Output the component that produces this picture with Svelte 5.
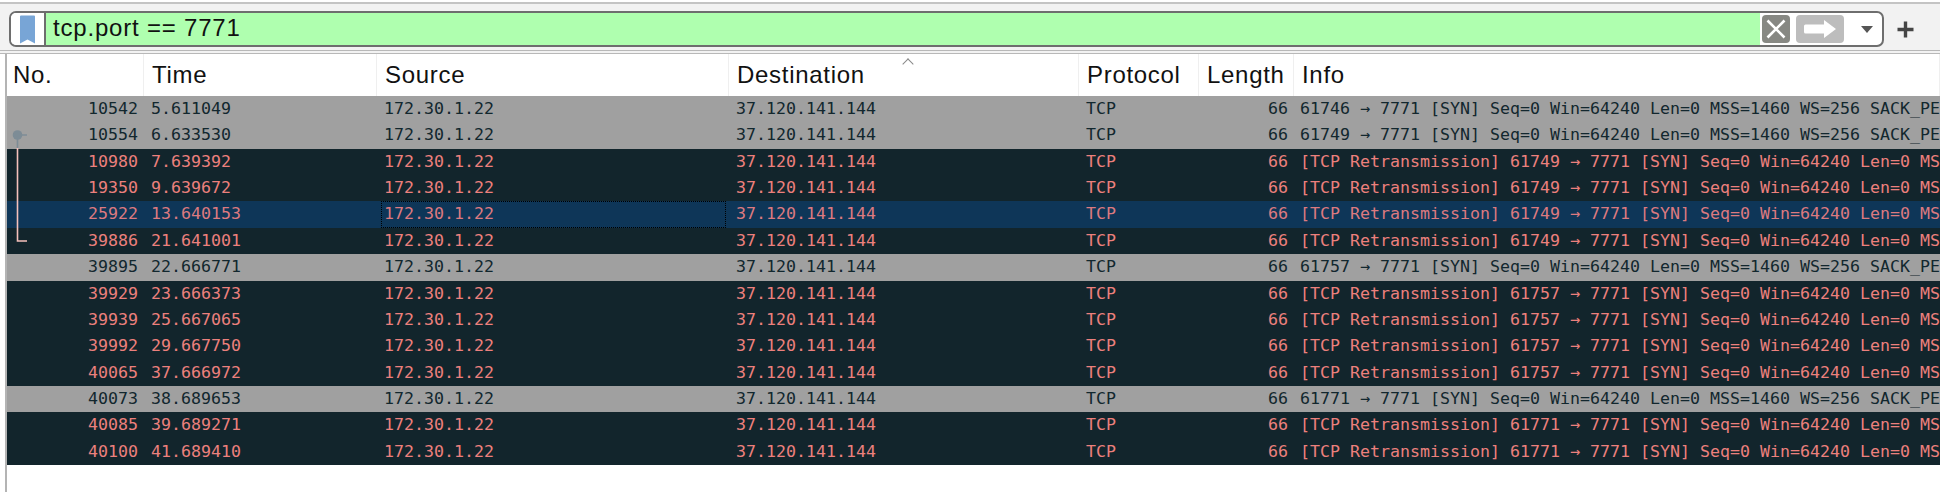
<script>
  const syn = (port) => `${port} → 7771 [SYN] Seq=0 Win=64240 Len=0 MSS=1460 WS=256 SACK_PERM=1`;
  const retrans = (port) => `[TCP Retransmission] ${port} → 7771 [SYN] Seq=0 Win=64240 Len=0 MSS=1460 WS=256 SACK_PERM=1`;

  const rows = [
    { no: 10542, time: '5.611049', info: syn(61746), bad: false },
    { no: 10554, time: '6.633530', info: syn(61749), bad: false },
    { no: 10980, time: '7.639392', info: retrans(61749), bad: true },
    { no: 19350, time: '9.639672', info: retrans(61749), bad: true },
    { no: 25922, time: '13.640153', info: retrans(61749), bad: true, selected: true },
    { no: 39886, time: '21.641001', info: retrans(61749), bad: true },
    { no: 39895, time: '22.666771', info: syn(61757), bad: false },
    { no: 39929, time: '23.666373', info: retrans(61757), bad: true },
    { no: 39939, time: '25.667065', info: retrans(61757), bad: true },
    { no: 39992, time: '29.667750', info: retrans(61757), bad: true },
    { no: 40065, time: '37.666972', info: retrans(61757), bad: true },
    { no: 40073, time: '38.689653', info: syn(61771), bad: false },
    { no: 40085, time: '39.689271', info: retrans(61771), bad: true },
    { no: 40100, time: '41.689410', info: retrans(61771), bad: true }
  ];
</script>

<div class="window">
  <div class="filter-bar">
    <div class="filter">
      <div class="bookmark">
        <svg width="17" height="29" viewBox="0 0 17 29">
          <path d="M1 1.5Q1 0.5 2 0.5H15Q16 0.5 16 1.5V28.5L8.5 24.5L1 28.5Z" fill="#78a5d6" />
        </svg>
      </div>
      <div class="filter-input">tcp.port == 7771</div>
      <div class="filter-actions">
        <span class="clear">
          <svg width="28" height="28" viewBox="0 0 28 28">
            <rect width="28" height="28" rx="4" fill="#878883" />
            <path d="M5.5 5.5L22.5 22.5M22.5 5.5L5.5 22.5" stroke="#fff" stroke-width="2.6" />
          </svg>
        </span>
        <span class="apply">
          <svg width="48" height="28" viewBox="0 0 48 28">
            <rect width="48" height="28" rx="4" fill="#bdbdbd" />
            <path d="M9.5 9.5H28V5L40 14L28 23V18.5H9.5Q8 18.5 8 17V11Q8 9.5 9.5 9.5Z" fill="#fff" />
          </svg>
        </span>
        <span class="caret"></span>
      </div>
    </div>
    <svg class="plus" width="17" height="17" viewBox="0 0 17 17">
      <path d="M8.5 0.5V16.5M0.5 8.5H16.5" stroke="#454545" stroke-width="3.4" />
    </svg>
  </div>

  <div class="packets">
    <div class="head">
      <div class="th first">No.</div>
      <div class="th">Time</div>
      <div class="th">Source</div>
      <div class="th sorted">Destination</div>
      <div class="th">Protocol</div>
      <div class="th">Length</div>
      <div class="th">Info</div>
    </div>

    {#each rows as row}
      <div class="row" class:bad={row.bad} class:selected={row.selected}>
        <div class="td num">{row.no}</div>
        <div class="td">{row.time}</div>
        <div class="td src" class:focus={row.selected}>172.30.1.22</div>
        <div class="td">37.120.141.144</div>
        <div class="td">TCP</div>
        <div class="td num">66</div>
        <div class="td info">{row.info}</div>
      </div>
    {/each}

    <!-- conversation marker in the No. column -->
    <svg class="related" width="24" height="115" viewBox="0 0 24 115">
      <path d="M10.5 18V111H20" fill="none" stroke="#f5c0bb" stroke-width="1.6" />
      <path d="M10.5 5V18M10.5 5H20" fill="none" stroke="#7d8c96" stroke-width="1.6" />
      <circle cx="10.5" cy="5" r="4.8" fill="#7d8c96" />
    </svg>
  </div>
</div>

<style>
  :global(body) {
    margin: 0;
    background: #fff;
  }

  .window {
    width: 1940px;
    height: 492px;
    overflow: hidden;
    font-family: "Liberation Sans", sans-serif;
  }

  .filter-bar {
    box-sizing: border-box;
    height: 52px;
    margin-top: 2px;
    display: flex;
    align-items: center;
    gap: 13px;
    padding: 4px 0 0 9px;
    background: #f2f2f2;
    border-top: 2px solid #c4c4c4;
    border-bottom: 4px double #b8b8b8;
  }

  .filter {
    box-sizing: border-box;
    width: 1875px;
    height: 36px;
    display: flex;
    background: #fff;
    border: 2px solid #6e6e6e;
    border-radius: 7px;
    overflow: hidden;
  }

  .bookmark {
    width: 35px;
    border-right: 2px solid #6e6e6e;
    padding: 2px 0 0 8px;
    box-sizing: border-box;
    background: #fff;
  }

  .filter-input {
    flex: 1;
    background: #afffaf;
    padding-left: 7px;
    font-size: 24px;
    line-height: 30px;
    letter-spacing: 0.8px;
    color: #111;
  }

  .filter-actions {
    width: 122px;
    display: flex;
    align-items: center;
    gap: 6px;
    padding-left: 2px;
    box-sizing: border-box;
  }

  .filter-actions span {
    display: flex;
  }

  .caret {
    width: 0;
    height: 0;
    margin-left: 11px;
    border-left: 6.5px solid transparent;
    border-right: 6.5px solid transparent;
    border-top: 7px solid #555;
  }

  .packets {
    position: relative;
    height: 438px;
    margin-left: 5px;
    border-left: 2px solid #b4b4b4;
  }

  .head,
  .row {
    display: grid;
    grid-template-columns: 137px 233px 352px 350px 120px 95px 1fr;
  }

  .head {
    height: 42px;
    background: #fff;
  }

  .th {
    padding-left: 8px;
    font-size: 24px;
    line-height: 42px;
    color: #111;
    letter-spacing: 0.7px;
    border-right: 1px solid #efefef;
    position: relative;
  }

  .th.first {
    padding-left: 6px;
  }

  .sorted::after {
    content: "";
    position: absolute;
    left: 50%;
    top: 6px;
    width: 7px;
    height: 7px;
    border-left: 1px solid #888;
    border-top: 1px solid #888;
    transform: rotate(45deg);
  }

  .row {
    height: 26.36px;
    background: #a0a0a0;
    color: #12272e;
    font-family: "DejaVu Sans Mono", monospace;
    font-size: 16.61px;
    line-height: 26.36px;
  }

  .row.bad {
    background: #12252c;
    color: #ec807d;
  }

  .row.selected {
    background: #0e3658;
    color: #dc7a80;
  }

  .td {
    padding-left: 7px;
    white-space: nowrap;
    overflow: hidden;
    min-width: 0;
  }

  .td.num {
    padding: 0 6px 0 0;
    text-align: right;
  }

  .td.info {
    padding-left: 6px;
  }

  .td.src.focus {
    outline: 1px dotted #000;
    outline-offset: -1px;
    margin: 0 3px 0 4px;
    padding-left: 3px;
  }

  .related {
    position: absolute;
    left: 0;
    top: 76px;
  }
</style>
